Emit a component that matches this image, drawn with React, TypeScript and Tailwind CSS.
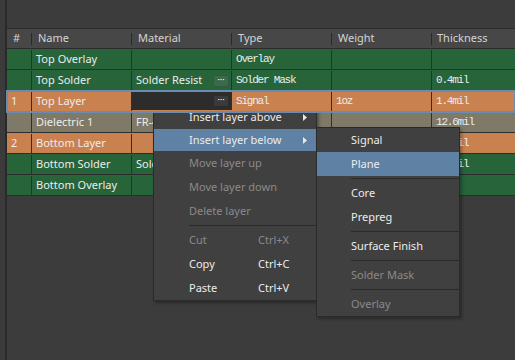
import { ReactNode } from "react";

type Row = {
  n?: string;
  name: string;
  mat?: string;
  btn?: boolean;
  type?: string;
  weight?: string;
  thick?: string;
  kind: "green" | "orange" | "diel";
  selected?: boolean;
};

// rows 4-7 are mostly under the context menu, only the visible bits are filled in
const rows: Row[] = [
  { name: "Top Overlay", type: "Overlay", kind: "green" },
  { name: "Top Solder", mat: "Solder Resist", btn: true, type: "Solder Mask", thick: "0.4mil", kind: "green" },
  { n: "1", name: "Top Layer", btn: true, type: "Signal", weight: "1oz", thick: "1.4mil", kind: "orange", selected: true },
  { name: "Dielectric 1", mat: "FR-4", thick: "12.6mil", kind: "diel" },
  { n: "2", name: "Bottom Layer", thick: "1.4mil", kind: "orange" },
  { name: "Bottom Solder", mat: "Solder Resist", thick: "0.4mil", kind: "green" },
  { name: "Bottom Overlay", kind: "green" },
];

const rowBg = {
  green: "bg-[#27643a]",
  orange: "bg-[#c98150]",
  diel: "bg-[#7f7a67]",
};

const sans = "font-['Noto_Sans',sans-serif]";
const mono = "font-['Liberation_Mono',monospace] text-[11px] tracking-[-1.2px]";

function Dots({ dark }: { dark?: boolean }) {
  return (
    <div
      className={`ml-auto mr-[2px] flex h-[12px] w-[16px] items-center justify-center rounded-[2px] border text-[9px] leading-none text-white ${
        dark ? "border-[#2b2b2b] bg-[#3a3a3a]" : "border-[#2f5a3c] bg-[#3b6a4a]"
      }`}
    >
      <span className="-mt-[3px]">···</span>
    </div>
  );
}

function Cell({ w, children, className = "" }: { w: string; children?: ReactNode; className?: string }) {
  return (
    <div className={`flex h-full items-center overflow-hidden whitespace-nowrap border-r border-[#2f2f2f] pl-[4px] ${w} ${className}`}>
      {children}
    </div>
  );
}

function MenuItem({
  label,
  shortcut,
  disabled,
  active,
  arrow,
  h = "h-[24px]",
  pl = "pl-[35px]",
}: {
  label: string;
  shortcut?: string;
  disabled?: boolean;
  active?: boolean;
  arrow?: boolean;
  h?: string;
  pl?: string;
}) {
  return (
    <div
      className={`flex items-center ${h} ${pl} ${active ? "bg-[#5f82a4]" : ""} ${
        disabled ? "text-[#8a8a8a]" : "text-[#ececec]"
      }`}
    >
      <span className={`whitespace-nowrap ${shortcut ? "w-[69px]" : ""}`}>{label}</span>
      {shortcut && <span>{shortcut}</span>}
      {arrow && (
        <svg className="ml-auto mr-[9px]" width="4" height="7" viewBox="0 0 4 7">
          <path d="M0 0 L4 3.5 L0 7 Z" fill="#e8e8e8" />
        </svg>
      )}
    </div>
  );
}

function Sep({ ml }: { ml: string }) {
  return (
    <div className="flex h-[5px] items-center">
      <div className={`h-px flex-1 bg-[#2a2a2a] ${ml}`} />
    </div>
  );
}

export default function App() {
  return (
    <div className={`relative flex h-[360px] w-[515px] overflow-hidden bg-[#3c3c3c] text-[11px] ${sans}`}>
      <div className="w-[5px] bg-[#3b3b3b]" />
      <div className="w-[2px] bg-[#2a2a2a]" />

      <div className="flex flex-1 flex-col">
        <div className="h-[29px] border-b border-[#2c2c2c]" />

        {/* header */}
        <div className="flex h-[19px] items-center bg-[#474747] text-[#d4d4d4]">
          <div className="flex h-full w-[25px] items-center pl-[6px]">
            <span>#</span>
            <div className="ml-auto h-[12px] w-px bg-[#2a2a2a]" />
          </div>
          {["Name", "Material", "Type", "Weight"].map((h) => (
            <div key={h} className="flex h-full w-[100px] items-center pl-[6px]">
              <span>{h}</span>
              <div className="ml-auto h-[12px] w-px bg-[#2a2a2a]" />
            </div>
          ))}
          <div className="flex h-full flex-1 items-center pl-[5px]">Thickness</div>
        </div>
        <div className="h-px bg-[#2c2c2c]" />

        {/* body */}
        <div className="flex flex-col">
          {rows.map((r) => (
            <div
              key={r.name}
              className={`flex h-[21px] border-b border-[#2d2d2d] pt-px text-[#ececec] ${rowBg[r.kind]} ${
                r.selected ? "relative z-10 outline-2 -outline-offset-1 outline-[#6a8cb2]" : ""
              }`}
            >
              <Cell w="w-[25px]">{r.n}</Cell>
              <Cell w="w-[100px]">{r.name}</Cell>
              <Cell w="w-[100px]" className={r.selected ? "-mt-px bg-[#2c2c2c]" : ""}>
                {r.mat && <span>{r.mat}</span>}
                {r.btn && <Dots dark={r.selected} />}
              </Cell>
              <Cell w="w-[100px]">
                <span className={mono}>{r.type}</span>
              </Cell>
              <Cell w="w-[100px]">
                <span className={mono}>{r.weight}</span>
              </Cell>
              <div className="flex flex-1 items-center pl-[4px]">
                <span className={mono}>{r.thick}</span>
              </div>
            </div>
          ))}
        </div>
      </div>

      {/* context menu */}
      <div className="absolute left-[153px] top-[105px] flex w-[164px] flex-col border border-[#2a2a2a] bg-[#404040] shadow-[2px_2px_3px_rgba(0,0,0,0.35)]">
        <MenuItem label="Insert layer above" arrow h="h-[23px]" />
        <MenuItem label="Insert layer below" arrow active h="h-[22px]" />
        <MenuItem label="Move layer up" disabled />
        <MenuItem label="Move layer down" disabled />
        <MenuItem label="Delete layer" disabled />
        <Sep ml="ml-[35px]" />
        <MenuItem label="Cut" shortcut="Ctrl+X" disabled />
        <MenuItem label="Copy" shortcut="Ctrl+C" />
        <MenuItem label="Paste" shortcut="Ctrl+V" />
      </div>

      {/* submenu */}
      <div className="absolute left-[316px] top-[127px] flex w-[144px] flex-col border border-[#2a2a2a] bg-[#404040] shadow-[2px_2px_3px_rgba(0,0,0,0.3)]">
        <MenuItem label="Signal" pl="pl-[34px]" />
        <MenuItem label="Plane" active pl="pl-[34px]" />
        <Sep ml="ml-[34px]" />
        <MenuItem label="Core" pl="pl-[34px]" />
        <MenuItem label="Prepreg" pl="pl-[34px]" />
        <Sep ml="ml-[34px]" />
        <MenuItem label="Surface Finish" pl="pl-[34px]" />
        <Sep ml="ml-[34px]" />
        <MenuItem label="Solder Mask" disabled pl="pl-[34px]" />
        <Sep ml="ml-[34px]" />
        <MenuItem label="Overlay" disabled pl="pl-[34px]" />
      </div>
    </div>
  );
}
